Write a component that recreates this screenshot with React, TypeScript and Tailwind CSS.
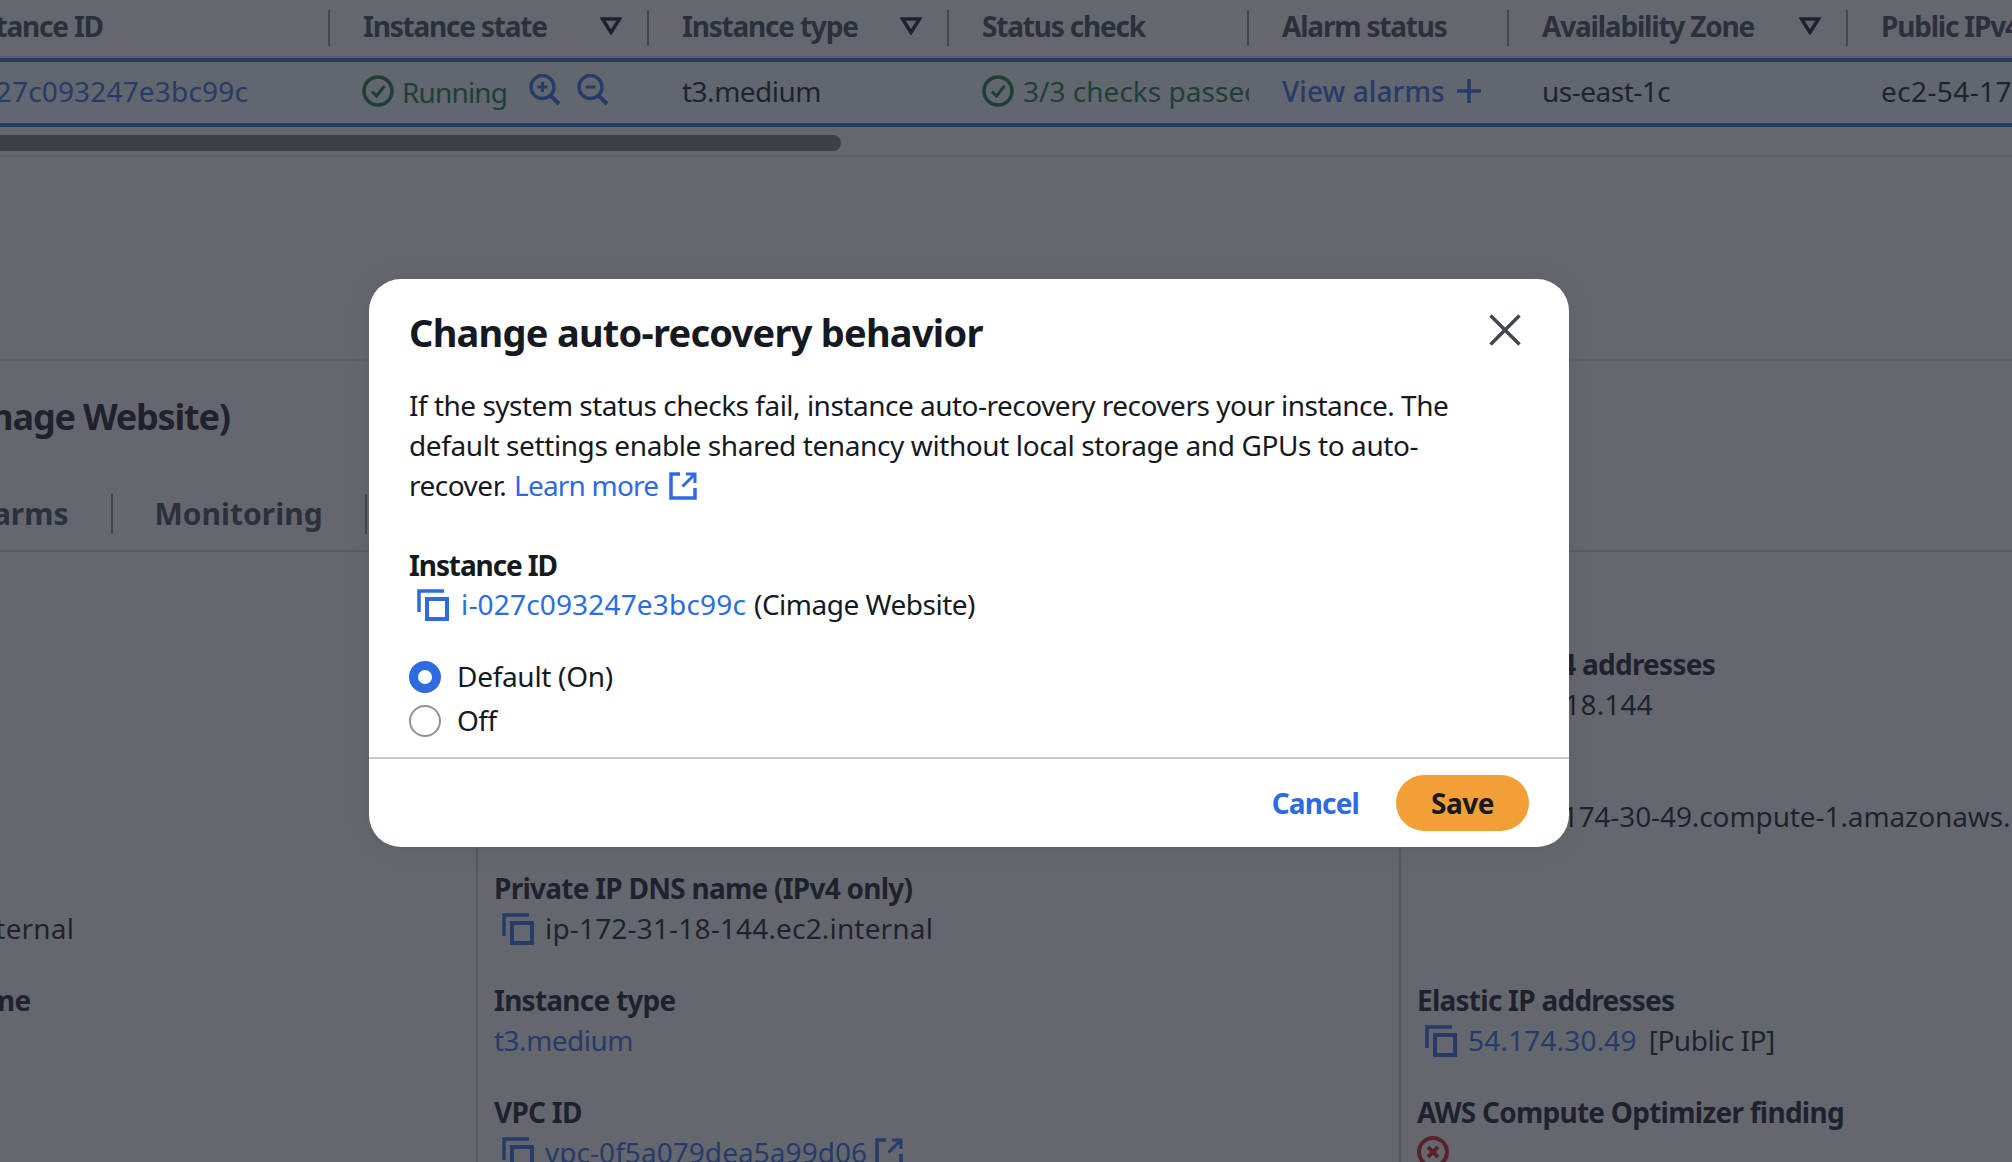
import React from "react";

const Copy = ({ className = "" }: { className?: string }) => (
  <svg viewBox="0 0 32 33" className={`w-8 h-[33px] shrink-0 ${className}`} fill="none" stroke="currentColor">
    <rect x="10" y="11" width="20" height="20" strokeWidth="4" />
    <path d="M2 24V3h25" strokeWidth="3.5" />
  </svg>
);

const External = ({ className = "" }: { className?: string }) => (
  <svg viewBox="0 0 28 28" className={`w-7 h-7 shrink-0 ${className}`} fill="none" stroke="currentColor" strokeWidth="3.5">
    <path d="M11 2H2v24h24v-10" />
    <path d="M17 2h9v9M26 2 13.5 14.5" strokeWidth="3" />
  </svg>
);

const Filter = () => (
  <svg viewBox="0 0 22 18" className="w-[22px] h-[18px] shrink-0" fill="none" stroke="currentColor" strokeWidth="3.5" strokeLinejoin="miter">
    <path d="M2.5 2h17L11 15.5z" />
  </svg>
);

const CheckCircle = () => (
  <svg viewBox="0 0 32 32" className="w-8 h-8 shrink-0" fill="none" stroke="#157a3c" strokeWidth="3.5">
    <circle cx="16" cy="16" r="14" />
    <path d="M10 16.5l4.5 4.5 8-10" strokeWidth="3" />
  </svg>
);

const Zoom = ({ plus }: { plus?: boolean }) => (
  <svg viewBox="0 0 32 32" className="w-8 h-8 shrink-0" fill="none" stroke="#2e6be8" strokeWidth="3.5">
    <circle cx="13.5" cy="13" r="11.5" />
    <path d="M21.5 21.5 30 30" strokeWidth="4" />
    <path d={plus ? "M8.5 13h10M13.5 8v10" : "M8.5 13h10"} strokeWidth="3" />
  </svg>
);

const Sep = () => <div className="w-[2px] h-9 bg-[#8d9096] shrink-0" />;

const Head = ({ w, label, filter }: { w: string; label: string; filter?: boolean }) => (
  <div className={`${w} shrink-0 flex items-center justify-end h-full`}>
    <div className="flex-1 pl-[33px] pr-[25px] pb-1 flex items-center justify-between">
      <span className="font-bold text-[#414750] tracking-[-1.2px]">{label}</span>
      {filter && <Filter />}
    </div>
    <Sep />
  </div>
);

const Cell = ({ w, children }: { w: string; children: React.ReactNode }) => (
  <div className={`${w} shrink-0 pl-[33px] pb-[3px] flex items-center h-full overflow-hidden whitespace-nowrap`}>{children}</div>
);

const Item = ({ label, children }: { label: string; children?: React.ReactNode }) => (
  <div className="h-[112px]">
    <div className="h-10 leading-10 font-bold whitespace-nowrap tracking-[-0.75px]">{label}</div>
    <div className="h-10 leading-10 flex items-center whitespace-nowrap">{children}</div>
  </div>
);

const Val = ({ children, link }: { children: React.ReactNode; link?: boolean }) => (
  <div className="flex items-center">
    <Copy className="ml-2 text-[#2e6be8]" />
    <span className={`ml-[11px] tracking-[0.17px] ${link ? "text-[#2e6be8]" : ""}`}>{children}</span>
  </div>
);

export default function App() {
  return (
    <div className="relative w-full h-[1162px] overflow-hidden bg-white text-[#16191f] text-[28px] leading-10 font-['Noto_Sans','Open_Sans',sans-serif] tracking-[-0.5px]">
      {/* table */}
      <div className="h-[157px] border-b-2 border-[#e9ebed] overflow-hidden">
        <div className="flex h-14 w-[3000px] -ml-[77px]">
          <Head w="w-[407px]" label="Instance ID" />
          <Head w="w-[319px]" label="Instance state" filter />
          <Head w="w-[300px]" label="Instance type" filter />
          <Head w="w-[300px]" label="Status check" />
          <Head w="w-[260px]" label="Alarm status" />
          <Head w="w-[339px]" label="Availability Zone" filter />
          <Head w="w-[500px]" label="Public IPv4 DNS" />
        </div>
        <div className="h-[2px] bg-[#d5dbdb]" />
        <div className="flex h-[69px] w-[3000px] -ml-[77px] bg-[#f1faff] border-y-4 border-[#2e6be8]">
          <Cell w="w-[407px]"><span className="text-[#2e6be8] ml-[7px] tracking-[0.17px]">i-027c093247e3bc99c</span></Cell>
          <Cell w="w-[319px]">
            <span className="-ml-[1px]"><CheckCircle /></span>
            <span className="ml-2 mt-[2px] text-[#157a3c] tracking-[-0.85px]">Running</span>
            <span className="ml-[22px] -mt-[3px] flex gap-4"><Zoom plus /><Zoom /></span>
          </Cell>
          <Cell w="w-[300px]">t3.medium</Cell>
          <Cell w="w-[300px]">
            <CheckCircle />
            <span className="ml-[9px] text-[#157a3c] tracking-[0.02px]">3/3 checks passed</span>
          </Cell>
          <Cell w="w-[260px]">
            <span className="text-[#2e6be8] font-medium tracking-[0.1px]">View alarms</span>
            <svg viewBox="0 0 26 26" className="w-[26px] h-[26px] ml-[11px]" fill="none" stroke="#2e6be8" strokeWidth="3.5"><path d="M13 1v24M1 13h24" /></svg>
          </Cell>
          <Cell w="w-[339px]">us-east-1c</Cell>
          <Cell w="w-[700px]"><span className="tracking-[0.4px]">ec2-54-174-30-49.compute-1.amazonaws.com</span></Cell>
        </div>
        <div className="mt-2 h-4 w-[841px] bg-[#7d7d7e] rounded-r-lg" />
      </div>

      {/* details */}
      <div className="mt-[202px] border-t-2 border-[#e9ebed]">
        <div className="h-[191px] border-b-2 border-[#d5dbdb] -ml-[600px] pl-[18px]">
          <div className="h-[110px] pt-[34px] text-[36px] leading-[44px] font-bold whitespace-nowrap tracking-[-1.2px] -ml-[218px]">
            Instance summary for i-027c093247e3bc99c (Cimage Website)
          </div>
          <div className="flex items-center h-10 mt-[23px] text-[#414750] text-[30px] tracking-[0px] font-bold whitespace-nowrap ml-[3px]">
            <span className="ml-[188px]">Details</span>
            <div className="w-[2px] h-10 bg-[#8d9096] mx-[42px]" />
            <span>Status and alarms</span>
            <div className="w-[2px] h-10 bg-[#8d9096] mx-[42px]" />
            <span>Monitoring</span>
            <div className="w-[2px] h-10 bg-[#8d9096] mx-[42px]" />
            <span>Security</span>
            <div className="w-[2px] h-10 bg-[#8d9096] mx-[42px]" />
            <span>Networking</span>
          </div>
        </div>
        <div className="flex pt-[92px] h-[610px] overflow-hidden">
          <div className="w-[476px] shrink-0 overflow-hidden">
            <div className="-ml-[439px] w-[915px]">
              <Item label="Instance ID" />
              <Item label="IPv6 address" />
              <div className="h-[112px]">
                <div className="h-10 leading-10 font-bold tracking-[-0.75px]">Hostname type</div>
                <div className="h-10 leading-10 whitespace-nowrap tracking-[0.17px]">IP name: ip-172-31-18-144.ec2.internal</div>
              </div>
              <Item label="Answer private resource DNS name" />
            </div>
          </div>
          <div className="w-[923px] shrink-0 border-l-2 border-[#c6c8cc] pl-4">
            <Item label="Public IPv4 address"><Val link>54.174.30.49</Val></Item>
            <Item label="Instance state" />
            <Item label="Private IP DNS name (IPv4 only)"><Val>ip-172-31-18-144.ec2.internal</Val></Item>
            <Item label="Instance type"><span className="text-[#2e6be8]">t3.medium</span></Item>
            <Item label="VPC ID">
              <Val link><span className="tracking-[0.05px]">vpc-0f5a079dea5a99d06</span></Val>
              <External className="ml-2 text-[#2e6be8]" />
            </Item>
          </div>
          <div className="flex-1 border-l-2 border-[#c6c8cc] pl-4">
            <Item label="Private IPv4 addresses"><Val>172.31.18.144</Val></Item>
            <Item label="Public DNS"><Val><span className="tracking-[-0.1px]">ec2-54-174-30-49.compute-1.amazonaws.com</span></Val></Item>
            <div className="h-[112px]" />
            <Item label="Elastic IP addresses">
              <Val link>54.174.30.49</Val>
              <span className="ml-3">[Public IP]</span>
            </Item>
            <Item label="AWS Compute Optimizer finding">
              <svg viewBox="0 0 32 32" className="w-8 h-8 shrink-0" fill="none" stroke="#d91515" strokeWidth="4">
                <circle cx="16" cy="16" r="14" />
                <path d="M11 11l10 10M21 11 11 21" />
              </svg>
            </Item>
          </div>
        </div>
      </div>

      {/* overlay + modal */}
      <div className="absolute inset-0 bg-[rgba(35,39,50,0.7)] pt-[279px] pl-[369px]">
        <div className="w-[1200px] h-[568px] bg-white rounded-[32px] shadow-[0_0_30px_rgba(0,0,0,0.08)] flex flex-col">
          <div className="flex items-start justify-between pl-10 pr-12 pt-[31px]">
            <h2 className="text-[38px] leading-[44px] font-bold tracking-[-0.75px]">Change auto-recovery behavior</h2>
            <svg viewBox="0 0 32 32" className="w-8 h-8 mt-1" fill="none" stroke="#414750" strokeWidth="3.5"><path d="M1.5 1.5l29 29M30.5 1.5l-29 29" /></svg>
          </div>
          <p className="px-10 mt-[31px] w-[1140px]">
            If the system status checks fail, instance auto-recovery recovers your instance. The{" "}
            <span className="tracking-[-0.4px]">default settings enable shared tenancy without local storage and GPUs to auto-</span>recover.{" "}
            <span className="ml-[1px] text-[#2e6be0] tracking-[-0.8px]">Learn more</span>
            <External className="inline-block ml-[11px] -mt-[6px] text-[#2e6be0]" />
          </p>
          <div className="px-10 mt-10 h-10 font-bold tracking-[-1.1px]">Instance ID</div>
          <div className="px-10 flex items-center h-10 -mt-[1px]">
            <Copy className="ml-[8px] text-[#2e6be0]" />
            <span className="ml-3 text-[#2e6be0] tracking-[0.17px]">i-027c093247e3bc99c</span>
            <span className="ml-2">(Cimage Website)</span>
          </div>
          <div className="px-10 mt-[37px] flex flex-col gap-3">
            <div className="flex items-center h-8 gap-4">
              <div className="w-8 h-8 rounded-full border-[9px] border-[#2e6be0] bg-white" />
              <span className="tracking-[-0.3px] -mt-[2px]">Default (On)</span>
            </div>
            <div className="flex items-center h-8 gap-4">
              <div className="w-8 h-8 rounded-full border-2 border-[#8d9096] bg-white" />
              <span className="-mt-[2px]">Off</span>
            </div>
          </div>
          <div className="mt-5 h-[2px] bg-[#c8c9ce]" />
          <div className="flex-1 flex items-center justify-end pr-10 pb-[1px] gap-[37px]">
            <span className="text-[#2e6be0] font-bold tracking-[-0.85px]">Cancel</span>
            <div className="w-[133px] h-14 rounded-[28px] bg-[#f39f38] flex items-center justify-center font-bold">Save</div>
          </div>
        </div>
      </div>
    </div>
  );
}
